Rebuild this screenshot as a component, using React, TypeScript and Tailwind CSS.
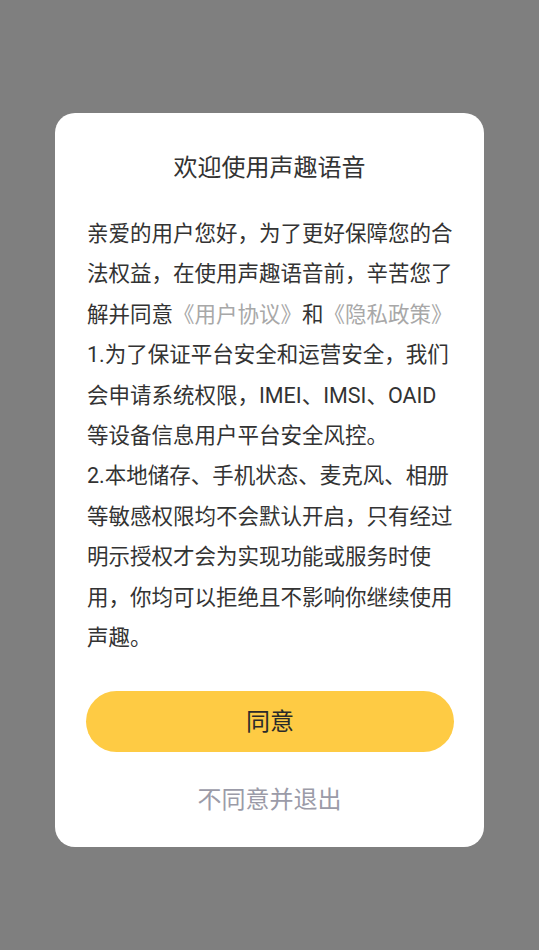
import React from "react";

export default function App() {
  const font = { fontFamily: 'Roboto, "Noto Sans CJK SC", sans-serif' };
  return (
    <div className="min-h-[950px] w-full bg-[#7f7f7f] pt-[113px]" style={font}>
      <div className="mx-[55px] rounded-[20px] bg-white pt-[38px] pb-[31px]">
        <div className="text-center text-[24px] leading-[34px] text-[#333333]">欢迎使用声趣语音</div>
        <div className="mt-[29px] pl-[32px] pr-[26px] text-[21.5px] leading-[40.4px] text-[#333333]">
          亲爱的用户您好，为了更好保障您的合法权益，在使用声趣语音前，辛苦您了解并同意
          <span className="text-[#a8a8a8]">《用户协议》</span>和<span className="text-[#a8a8a8]">《隐私政策》</span>
          <br />
          1.为了保证平台安全和运营安全，我们会申请系统权限，IMEI、IMSI、OAID
          <br />
          等设备信息用户平台安全风控。
          <br />
          2.本地储存、手机状态、麦克风、相册等敏感权限均不会默认开启，只有经过明示授权才会为实现功能或服务时使用，你均可以拒绝且不影响你继续使用声趣。
        </div>
        <button className="mx-[31px] mt-[33px] flex h-[61px] w-[368px] items-center justify-center rounded-full bg-[#fecb44] text-[24px] text-[#2a2a2a]">
          同意
        </button>
        <div className="mt-[32px] text-center text-[24px] leading-[32px] text-[#9b9ba8]">不同意并退出</div>
      </div>
    </div>
  );
}
